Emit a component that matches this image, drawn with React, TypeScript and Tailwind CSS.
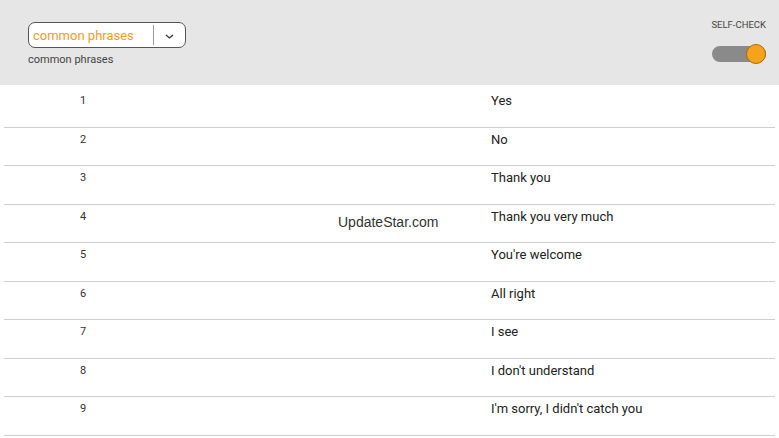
import React from 'react';

const phrases = [
  'Yes',
  'No',
  'Thank you',
  'Thank you very much',
  "You're welcome",
  'All right',
  'I see',
  "I don't understand",
  "I'm sorry, I didn't catch you",
];

export default function App() {
  return (
    <div className="relative w-[779px] h-[438px] overflow-hidden bg-white font-['Roboto',sans-serif]">
      {/* Header */}
      <div className="flex h-[85px] justify-between bg-[#e6e6e6] pl-[28px] pr-[13px]">
        <div className="pt-[22px]">
          <div className="flex h-[26px] w-[158px] items-center rounded-[7px] border border-[#555] bg-white">
            <span className="flex-1 pl-[4px] text-[13px] leading-none text-[#f39c1f]">common phrases</span>
            <div className="h-[20px] w-px bg-[#999]" />
            <div className="flex w-[31px] justify-center pt-[2px]">
              <svg width="9" height="5" viewBox="0 0 9 5" fill="none">
                <path d="M1 1l3.5 3L8 1" stroke="#333" strokeWidth="1.3" />
              </svg>
            </div>
          </div>
          <div className="mt-[5px] text-[11px] leading-[13px] text-[#444]">common phrases</div>
        </div>
        <div className="flex flex-col items-end pt-[19px]">
          <div className="text-[9.5px] leading-[12px] text-[#444]">SELF-CHECK</div>
          <div className="relative mt-[15px] h-[16px] w-[54px] rounded-full bg-[#8a8a8a]">
            <div className="absolute right-0 top-[-2px] h-[20px] w-[20px] rounded-full border border-[#b06a00] bg-[#f7a21b]" />
          </div>
        </div>
      </div>

      {/* Rows */}
      <div className="mx-[4px] pt-[4px]">
        {phrases.map((p, i) => (
          <div key={i} className="flex h-[38.5px] border-b border-[#cfcfcf] pt-[4px] leading-[16px]">
            <div className="w-[487px] pl-[76px] text-[11px] text-[#333]">{i + 1}</div>
            <div className="text-[13px] text-[#222]">{p}</div>
          </div>
        ))}
      </div>

      {/* Watermark */}
      <div className="absolute left-[338px] top-[212px] font-['Liberation_Sans',sans-serif] text-[14px] text-[#333]">
        UpdateStar.com
      </div>
    </div>
  );
}
